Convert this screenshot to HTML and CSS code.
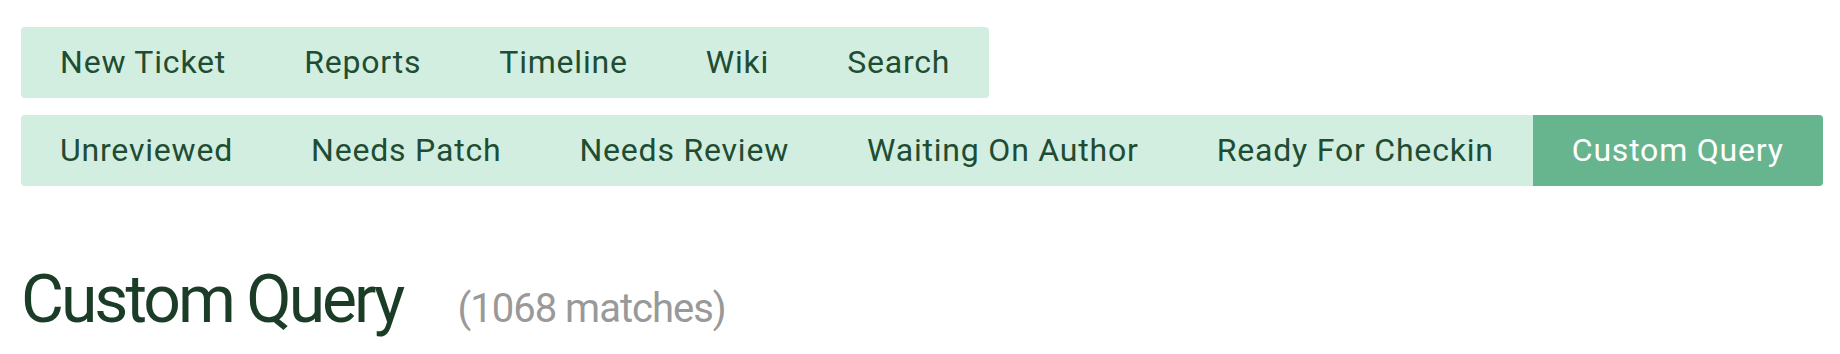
FILE: index.html
```html
<!DOCTYPE html>
<html lang="en">
<head>
<meta charset="utf-8">
<title>Custom Query</title>
<link rel="stylesheet" href="styles.css">
</head>
<body>
<div class="page">
  <nav class="navbars">
    <ul class="navbar">
      <li><a href="#">New Ticket</a></li>
      <li><a href="#">Reports</a></li>
      <li><a href="#">Timeline</a></li>
      <li><a href="#">Wiki</a></li>
      <li><a href="#">Search</a></li>
    </ul>
    <ul class="navbar">
      <li><a href="#">Unreviewed</a></li>
      <li><a href="#">Needs Patch</a></li>
      <li><a href="#">Needs Review</a></li>
      <li><a href="#">Waiting On Author</a></li>
      <li><a href="#">Ready For Checkin</a></li>
      <li class="active"><a href="#">Custom Query</a></li>
    </ul>
  </nav>
  <h1 class="title">Custom Query <span class="numrows">(1068 matches)</span></h1>
</div>
</body>
</html>
```

FILE: styles.css
```css
html, body {
  margin: 0;
  padding: 0;
  background: #ffffff;
}

body {
  font-family: Roboto, "Liberation Sans", sans-serif;
}

.page {
  padding: 27px 0 0 21px;
}

.navbars {
  display: flex;
  flex-direction: column;
  align-items: flex-start;
  gap: 17px;
}

.navbar {
  display: flex;
  flex-wrap: nowrap;
  list-style: none;
  margin: 0;
  padding: 0;
  background: #d2eee0;
  border-radius: 4px;
  overflow: hidden;
}

.navbar li {
  display: block;
  flex: none;
}

.navbar a {
  display: block;
  padding: 17px 39px;
  font-size: 32px;
  line-height: 37px;
  letter-spacing: 0.8px;
  white-space: nowrap;
  color: #1e4d33;
  text-decoration: none;
}

.navbar li.active {
  background: #66b58f;
}

.navbar li.active a {
  color: #ffffff;
}

.title {
  margin: 75px 0 0 0;
  font-size: 66px;
  font-weight: 400;
  line-height: 77px;
  letter-spacing: -3px;
  white-space: nowrap;
  color: #1b3d27;
}

.numrows {
  margin-left: 42px;
  font-size: 40px;
  letter-spacing: -1px;
  color: #999999;
}
```
